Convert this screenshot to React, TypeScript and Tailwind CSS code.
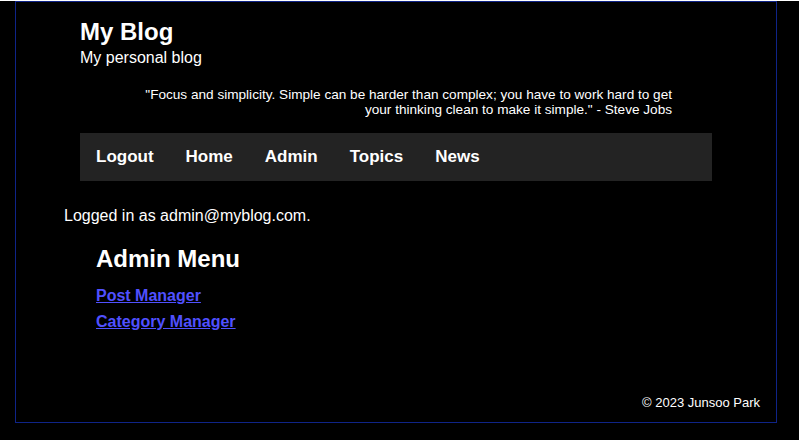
export default function App() {
  const navItems = ["Logout", "Home", "Admin", "Topics", "News"];

  return (
    <div className="min-h-screen w-full bg-black text-white font-['Liberation_Sans',Arial,sans-serif]">
      <div className="ml-[15px] mt-px flex h-[422px] w-[762px] flex-col border border-[#0f2488]">
        {/* Header */}
        <header className="pl-[64px] pt-[16px]">
          <h1 className="text-[24px] font-bold leading-[28px]">My Blog</h1>
          <p className="mt-[2px] text-[16px] leading-[20px]">My personal blog</p>
          <blockquote className="mx-[40px] mt-[19px] w-[552px] text-right text-[13.6px] leading-[15px]">
            "Focus and simplicity. Simple can be harder than complex; you have to work hard to get your thinking clean to make it simple." - Steve Jobs
          </blockquote>
          <nav className="mt-[16px] flex h-12 w-[632px] items-center bg-[#232323]">
            {navItems.map((item) => (
              <a key={item} className="px-4 text-[17px] font-bold leading-[20px] text-white">
                {item}
              </a>
            ))}
          </nav>
        </header>

        {/* Main */}
        <main className="pl-[48px]">
          <p className="mt-[25px] text-[16px] leading-[20px]">Logged in as admin@myblog.com.</p>
          <section className="pl-[32px]">
            <h2 className="mt-[19px] text-[24px] font-bold leading-[28px]">Admin Menu</h2>
            <ul>
              <li className="mt-[13px] text-[16px] leading-[20px]">
                <a className="font-bold text-[#5050ff] underline">Post Manager</a>
              </li>
              <li className="mt-[6px] text-[16px] leading-[20px]">
                <a className="font-bold text-[#5050ff] underline">Category Manager</a>
              </li>
            </ul>
          </section>
        </main>

        <footer className="mt-auto pb-[11px] pr-4 text-right text-[13px] leading-[16px]">
          © 2023 Junsoo Park
        </footer>
      </div>
    </div>
  );
}
